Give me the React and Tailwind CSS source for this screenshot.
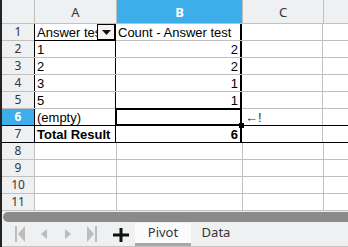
import React from "react";

const cellFont = { fontFamily: '"Liberation Sans", Arial, sans-serif' };

const rows = [
  { n: 1, a: "Answer test", b: "Count - Answer test", head: true },
  { n: 2, a: "1", b: "2" },
  { n: 3, a: "2", b: "2" },
  { n: 4, a: "3", b: "1" },
  { n: 5, a: "5", b: "1" },
  { n: 6, a: "(empty)", b: "", cursor: true },
  { n: 7, a: "Total Result", b: "6", total: true },
  { n: 8 },
  { n: 9 },
  { n: 10 },
  { n: 11 },
];

const RowHead = ({ n, active }) => (
  <div
    className={`w-[33px] h-full shrink-0 border-r border-[#c0c0c0] flex items-center justify-center text-[12px] font-[Noto_Sans,sans-serif] ${
      active ? "bg-[#3daee9] text-white font-bold" : "bg-[#eff0f1] text-[#31363b]"
    }`}
  >
    {n}
  </div>
);

const Row = ({ r }) => {
  const inPivot = r.n <= 7;
  const rowBorder =
    r.n === 1 || r.n === 6 || r.n === 7 ? "border-black" : "border-[#c0c0c0]";
  return (
    <div className={`flex h-[17px] border-b ${r.n <= 5 ? "border-[#c0c0c0]" : rowBorder}`}>
      <RowHead n={r.n} active={r.n === 6} />
      <div
        className={`relative w-[82px] shrink-0 border-r flex items-center text-[13px] overflow-hidden whitespace-nowrap ${
          inPivot ? "border-black border-l pl-px -ml-px" : "border-[#c0c0c0]"
        } ${r.total ? "font-bold" : ""} ${r.n === 1 || r.n === 6 || r.n === 7 ? "border-b border-b-black -mb-px" : ""}`}
        style={cellFont}
      >
        <span className="leading-none pl-[1px]">{r.a}</span>
        {r.head && (
          <div className="absolute right-0 top-0 w-[18px] h-[16px] border border-black bg-[#f4f4f4] flex items-center justify-center">
            <svg width="9" height="5" viewBox="0 0 9 5">
              <path d="M0 0h9L4.5 5z" fill="#111" />
            </svg>
          </div>
        )}
      </div>
      <div
        className={`relative w-[126px] shrink-0 flex items-center justify-end text-[13px] pr-[2px] whitespace-nowrap ${
          inPivot ? "border-r-2 border-black" : "border-r border-[#c0c0c0]"
        } ${r.total ? "font-bold" : ""} ${r.head ? "justify-start pl-[2px]" : ""}`}
        style={cellFont}
      >
        <span className="leading-none">{r.b}</span>
        {r.cursor && (
          <>
            <div className="absolute -left-px -top-px right-[-2px] bottom-[-1px] border-2 border-black pointer-events-none" />
            <div className="absolute right-[-4px] bottom-[-3px] w-[5px] h-[5px] bg-black" />
          </>
        )}
      </div>
      <div className="w-[81px] shrink-0 border-r border-[#c0c0c0] flex items-center pl-[3px] text-[13px] text-[#333]" style={cellFont}>
        {r.cursor && <span className="leading-none">←!</span>}
      </div>
      <div className="flex-1" />
    </div>
  );
};

const Nav = ({ d }) => (
  <svg width="12" height="16" viewBox="0 0 12 16">
    <path d={d} fill="#bcbcbc" />
  </svg>
);

export default function App() {
  return (
    <div className="w-[348px] h-[247px] overflow-hidden bg-white flex">
      <div className="w-[2px] bg-[#232323] shrink-0" />
      <div className="flex-1 flex flex-col min-w-0">
        {/* column header */}
        <div className="flex h-[24px] border-b border-[#c0c0c0] bg-[#eff0f1] text-[13px] text-[#31363b] font-[Noto_Sans,sans-serif]">
          <div className="w-[33px] shrink-0 border-r border-[#c0c0c0]" />
          <div className="w-[82px] shrink-0 border-r border-[#c0c0c0] flex items-center justify-center pt-[3px]">A</div>
          <div className="w-[126px] shrink-0 border-r border-[#c0c0c0] bg-[#3daee9] text-white font-bold flex items-center justify-center pt-[3px]">B</div>
          <div className="w-[81px] shrink-0 border-r border-[#c0c0c0] flex items-center justify-center pt-[3px]">C</div>
          <div className="flex-1" />
        </div>
        {rows.map((r) => (
          <Row key={r.n} r={r} />
        ))}
        {/* horizontal scrollbar */}
        <div className="h-[12px] bg-[#efefef] pt-[1px] pl-px">
          <div className="h-[10px] bg-[#8a8a8a] rounded-l-[5px]" />
        </div>
        {/* sheet tabs */}
        <div className="flex-1 flex items-stretch bg-[#eff0f1] border-b border-[#c4c4c4]">
          <div className="flex items-center gap-[12px] pl-[12px] w-[105px] pb-[1px]">
            <Nav d="M1 0h2v16H1zM11 0v16L4 8z" />
            <Nav d="M9 3v10L3 8z" />
            <Nav d="M3 3v10l6-5z" />
            <Nav d="M1 0v16l7-8zM9 0h2v16H9z" />
          </div>
          <div className="w-[28px] flex items-center justify-center">
            <svg width="16" height="14" viewBox="0 0 16 14">
              <path d="M6.5 0h3v5.5H16v3H9.5V14h-3V8.5H0v-3h6.5z" fill="#111" />
            </svg>
          </div>
          <div
            className="w-[56px] bg-[#fbfbfb] border-b-[3px] border-[#a8a8a8] flex items-center justify-center text-[13px] text-[#31363b]"
            style={{ fontFamily: '"Noto Sans", sans-serif' }}
          >
            Pivot
          </div>
          <div
            className="w-[50px] flex items-center justify-center text-[13px] text-[#31363b] pb-[3px]"
            style={{ fontFamily: '"Noto Sans", sans-serif' }}
          >
            Data
          </div>
        </div>
      </div>
    </div>
  );
}
